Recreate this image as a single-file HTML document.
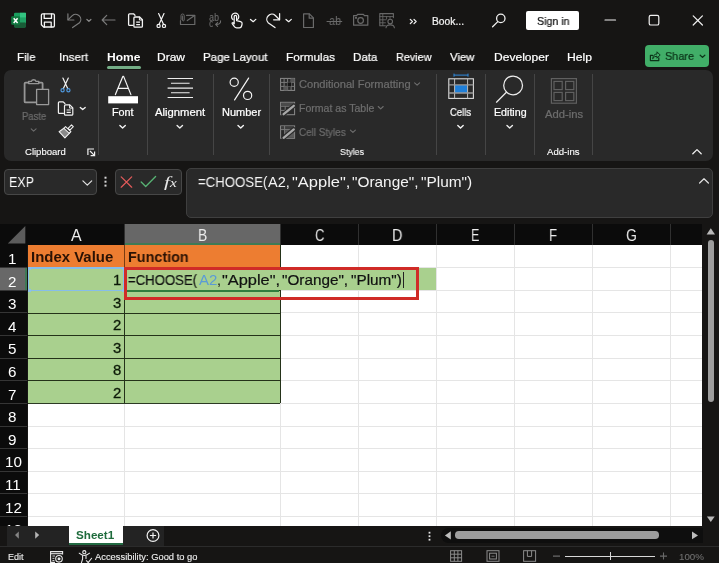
<!DOCTYPE html>
<html lang="en"><head><meta charset="utf-8"><title>Excel</title>
<style>
*{box-sizing:border-box;margin:0;padding:0}
html,body{width:719px;height:563px;overflow:hidden;background:#161514}
body{font-family:"Liberation Sans","DejaVu Sans",sans-serif;color:#fff;position:relative}
.a{position:absolute}
.t{position:absolute;white-space:nowrap;line-height:1;transform-origin:0 50%;will-change:transform}
svg{position:absolute;left:0;top:0;overflow:visible}
</style></head><body>
<div class="a" style="left:4px;top:70px;width:709px;height:91px;background:#292929;border-radius:7px"></div>
<div class="a" style="left:107px;top:65.5px;width:34px;height:3px;background:#74ad86;border-radius:1.5px"></div>
<div class="a" style="left:526px;top:11px;width:53px;height:18.5px;background:#ffffff;border-radius:2px"></div>
<div class="a" style="left:645px;top:44.5px;width:64px;height:22.5px;background:#41ae68;border-radius:4px"></div>
<div class="a" style="left:98px;top:74px;width:1px;height:81px;background:#454545;"></div>
<div class="a" style="left:147.3px;top:74px;width:1px;height:81px;background:#454545;"></div>
<div class="a" style="left:213px;top:74px;width:1px;height:81px;background:#454545;"></div>
<div class="a" style="left:269px;top:74px;width:1px;height:81px;background:#454545;"></div>
<div class="a" style="left:436px;top:74px;width:1px;height:81px;background:#454545;"></div>
<div class="a" style="left:485px;top:74px;width:1px;height:81px;background:#454545;"></div>
<div class="a" style="left:534.3px;top:74px;width:1px;height:81px;background:#454545;"></div>
<div class="a" style="left:592px;top:74px;width:1px;height:81px;background:#454545;"></div>
<div class="a" style="left:4px;top:168.5px;width:93px;height:26px;background:#292929;border:1px solid #474747;border-radius:4px"></div>
<div class="a" style="left:115px;top:168.5px;width:67px;height:26px;background:#292929;border:1px solid #474747;border-radius:4px"></div>
<div class="a" style="left:185.5px;top:168px;width:527px;height:49.5px;background:#292929;border:1px solid #3f3f3f;border-radius:5px"></div>
<div class="a" style="left:0px;top:223.5px;width:702px;height:21.69999999999999px;background:#0b0b0b;"></div>
<div class="a" style="left:0px;top:245.2px;width:27.4px;height:280.40000000000003px;background:#0b0b0b;"></div>
<div class="a" style="left:28px;top:245.2px;width:674px;height:280.40000000000003px;background:#ffffff;"></div>
<div class="a" style="left:124.5px;top:223.5px;width:155px;height:21.7px;background:#676767;border-bottom:2px solid #3f7a55"></div>
<div class="a" style="left:0px;top:268.3px;width:27.4px;height:22.6px;background:#686868;border-right:2px solid #3f7a55"></div>
<div class="a" style="left:124px;top:224px;width:1px;height:21px;background:#303030;"></div>
<div class="a" style="left:280px;top:224px;width:1px;height:21px;background:#303030;"></div>
<div class="a" style="left:358px;top:224px;width:1px;height:21px;background:#303030;"></div>
<div class="a" style="left:436px;top:224px;width:1px;height:21px;background:#303030;"></div>
<div class="a" style="left:514px;top:224px;width:1px;height:21px;background:#303030;"></div>
<div class="a" style="left:592px;top:224px;width:1px;height:21px;background:#303030;"></div>
<div class="a" style="left:670px;top:224px;width:1px;height:21px;background:#303030;"></div>
<div class="a" style="left:0px;top:267px;width:27.4px;height:1px;background:#353535;"></div>
<div class="a" style="left:0px;top:290px;width:27.4px;height:1px;background:#353535;"></div>
<div class="a" style="left:0px;top:312px;width:27.4px;height:1px;background:#353535;"></div>
<div class="a" style="left:0px;top:335px;width:27.4px;height:1px;background:#353535;"></div>
<div class="a" style="left:0px;top:358px;width:27.4px;height:1px;background:#353535;"></div>
<div class="a" style="left:0px;top:380px;width:27.4px;height:1px;background:#353535;"></div>
<div class="a" style="left:0px;top:403px;width:27.4px;height:1px;background:#353535;"></div>
<div class="a" style="left:0px;top:426px;width:27.4px;height:1px;background:#353535;"></div>
<div class="a" style="left:0px;top:448px;width:27.4px;height:1px;background:#353535;"></div>
<div class="a" style="left:0px;top:471px;width:27.4px;height:1px;background:#353535;"></div>
<div class="a" style="left:0px;top:493px;width:27.4px;height:1px;background:#353535;"></div>
<div class="a" style="left:0px;top:516px;width:27.4px;height:1px;background:#353535;"></div>
<div class="a" style="left:124px;top:245.2px;width:1px;height:280.40000000000003px;background:#e5e5e5;"></div>
<div class="a" style="left:280px;top:245.2px;width:1px;height:280.40000000000003px;background:#e5e5e5;"></div>
<div class="a" style="left:358px;top:245.2px;width:1px;height:280.40000000000003px;background:#e5e5e5;"></div>
<div class="a" style="left:436px;top:245.2px;width:1px;height:280.40000000000003px;background:#e5e5e5;"></div>
<div class="a" style="left:514px;top:245.2px;width:1px;height:280.40000000000003px;background:#e5e5e5;"></div>
<div class="a" style="left:592px;top:245.2px;width:1px;height:280.40000000000003px;background:#e5e5e5;"></div>
<div class="a" style="left:670px;top:245.2px;width:1px;height:280.40000000000003px;background:#e5e5e5;"></div>
<div class="a" style="left:28px;top:267px;width:674px;height:1px;background:#e5e5e5;"></div>
<div class="a" style="left:28px;top:290px;width:674px;height:1px;background:#e5e5e5;"></div>
<div class="a" style="left:28px;top:312px;width:674px;height:1px;background:#e5e5e5;"></div>
<div class="a" style="left:28px;top:335px;width:674px;height:1px;background:#e5e5e5;"></div>
<div class="a" style="left:28px;top:358px;width:674px;height:1px;background:#e5e5e5;"></div>
<div class="a" style="left:28px;top:380px;width:674px;height:1px;background:#e5e5e5;"></div>
<div class="a" style="left:28px;top:403px;width:674px;height:1px;background:#e5e5e5;"></div>
<div class="a" style="left:28px;top:426px;width:674px;height:1px;background:#e5e5e5;"></div>
<div class="a" style="left:28px;top:448px;width:674px;height:1px;background:#e5e5e5;"></div>
<div class="a" style="left:28px;top:471px;width:674px;height:1px;background:#e5e5e5;"></div>
<div class="a" style="left:28px;top:493px;width:674px;height:1px;background:#e5e5e5;"></div>
<div class="a" style="left:28px;top:516px;width:674px;height:1px;background:#e5e5e5;"></div>
<div class="a" style="left:28px;top:245.2px;width:252px;height:22.6px;background:#ed7d31;"></div>
<div class="a" style="left:28px;top:267.8px;width:252px;height:135.60000000000002px;background:#a9d08e;"></div>
<div class="a" style="left:280px;top:268.3px;width:156px;height:21.6px;background:#a9d08e;"></div>
<div class="a" style="left:28px;top:289.9px;width:252px;height:1px;background:#243219;"></div>
<div class="a" style="left:28px;top:312.5px;width:252px;height:1px;background:#243219;"></div>
<div class="a" style="left:28px;top:335.1px;width:252px;height:1px;background:#243219;"></div>
<div class="a" style="left:28px;top:357.7px;width:252px;height:1px;background:#243219;"></div>
<div class="a" style="left:28px;top:380.3px;width:252px;height:1px;background:#243219;"></div>
<div class="a" style="left:28px;top:402.9px;width:252px;height:1px;background:#2c3a24;"></div>
<div class="a" style="left:123.6px;top:245.2px;width:1px;height:158.20000000000002px;background:#243219;"></div>
<div class="a" style="left:279.5px;top:245.2px;width:1px;height:22.6px;background:#243219;"></div>
<div class="a" style="left:279.5px;top:290.4px;width:1px;height:113.0px;background:#243219;"></div>
<div class="a" style="left:123.6px;top:245.2px;width:1px;height:22.6px;background:#7a3c12;"></div>
<div class="a" style="left:28px;top:267.40000000000003px;width:96px;height:1.5px;background:#86bdea;"></div>
<div class="a" style="left:28px;top:289.79999999999995px;width:96px;height:1.6px;background:#86bdea;"></div>
<div class="a" style="left:28px;top:267.8px;width:1px;height:22.6px;background:#86bdea;"></div>
<div class="a" style="left:123px;top:267.8px;width:1px;height:22.6px;background:#86bdea;"></div>
<div class="a" style="left:27.5px;top:266.5px;width:3px;height:3px;background:#8fbfe8;"></div>
<div class="a" style="left:121.8px;top:266.5px;width:3px;height:3px;background:#8fbfe8;"></div>
<div class="a" style="left:27.5px;top:288.59999999999997px;width:3px;height:3px;background:#8fbfe8;"></div>
<div class="a" style="left:121.8px;top:288.59999999999997px;width:3px;height:3px;background:#8fbfe8;"></div>
<div class="a" style="left:127px;top:290.0px;width:152px;height:1.8px;background:#2f7d3e;"></div>
<div class="a" style="left:123.6px;top:267.2px;width:295.6px;height:32.8px;border:3.4px solid #d02b27"></div>
<div class="a" style="left:402.6px;top:272px;width:1px;height:16px;background:#222;"></div>
<div class="a" style="left:702px;top:223.5px;width:17px;height:302.1px;background:#161514;"></div>
<div class="a" style="left:707.5px;top:239.5px;width:6.6px;height:162px;background:#9d9d9d;border-radius:3.3px"></div>
<div class="a" style="left:0px;top:525.6px;width:719px;height:37.39999999999998px;background:#161514;"></div>
<div class="a" style="left:7px;top:526.0px;width:157px;height:19.6px;background:#232323;"></div>
<div class="a" style="left:440.5px;top:528px;width:262px;height:15px;background:#0e0e0e;border-radius:7.5px 0 0 7.5px"></div>
<div class="a" style="left:0px;top:546px;width:719px;height:1px;background:#2b2b2b;"></div>
<div class="a" style="left:68.8px;top:525.6px;width:54.4px;height:17.6px;background:#ffffff;"></div>
<div class="a" style="left:68.8px;top:543.2px;width:54.2px;height:2px;background:#226a42;"></div>
<div class="a" style="left:455px;top:531.3px;width:203.5px;height:7.6px;background:#9d9d9d;border-radius:3.8px"></div>
<div class="a" style="left:565px;top:555.6px;width:90px;height:1px;background:#d8d8d8;"></div>
<div class="a" style="left:609.6px;top:552px;width:1.2px;height:8px;background:#d8d8d8;"></div>
<svg width="719" height="563" viewBox="0 0 719 563" fill="none" stroke-linecap="round" stroke-linejoin="round">
<!-- excel logo -->
<g stroke="none">
<rect x="14" y="12.8" width="12" height="14.6" rx="1.3" fill="#1a9e5f"/>
<rect x="20" y="12.8" width="6" height="4.9" fill="#33c481"/>
<rect x="14" y="17.7" width="6" height="4.9" fill="#107c41"/>
<rect x="20" y="17.7" width="6" height="4.9" fill="#21a366"/>
<rect x="14" y="22.6" width="12" height="4.8" rx="1.2" fill="#185c37"/>
<rect x="11.2" y="16.2" width="8.8" height="8.6" rx="1" fill="#0f7a40"/>
<path d="M13.7 18.2 L17.6 23 M17.6 18.2 L13.7 23" stroke="#fff" stroke-width="1.5" stroke-linecap="butt"/>
</g>
<!-- save -->
<g stroke="#f5f5f5" stroke-width="1.3">
<path d="M42.6 13.8 H53.2 Q54.4 13.8 54.4 15 V25.8 Q54.4 27 53.2 27 H43.6 L41.4 24.8 V15 Q41.4 13.8 42.6 13.8 Z"/>
<path d="M44.2 13.8 V18.4 H51.5 V13.8"/>
<path d="M44.4 27 V22.2 H51.2 V27"/>
</g>
<!-- undo -->
<g stroke="#7b7b7b" stroke-width="1.2">
<path d="M67.9 13.8 V20 H73.9"/>
<path d="M68.2 19.7 L72.3 15.6 A5.1 5.1 0 0 1 79.5 22.8 L72.6 27.6"/>
<path d="M86.900 19.500 L88.900 21.300 L90.900 19.500" stroke="#8a8a8a" stroke-width="1.200"/>
<path d="M102.2 20 H115 M106.7 15.4 L102.2 20 L106.7 24.6"/>
</g>
<!-- copy -->
<g stroke="#f5f5f5" stroke-width="1.3">
<path d="M133 25.4 H129.6 Q128.6 25.4 128.6 24.4 V14.8 Q128.6 13.8 129.6 13.8 H133.5 L135 15.3"/>
<path d="M134.9 17 H139.6 L142.4 19.8 V26.2 Q142.4 27.2 141.4 27.2 H134.9 Q133.9 27.2 133.9 26.2 V18 Q133.9 17 134.9 17 Z"/>
<path d="M139.4 17.2 V20 H142.2" stroke-width="1"/>
<path d="M136.2 22.2 H140 M136.2 24.6 H140" stroke-width="1.2" stroke-linecap="butt"/>
</g>
<!-- scissors -->
<g stroke="#f5f5f5" stroke-width="1.2">
<path d="M158.6 13.5 L163.6 24.4 M164 13.5 L159 24.4"/>
<circle cx="158.6" cy="25.9" r="1.6"/><circle cx="164" cy="25.9" r="1.6"/>
</g>
<!-- mail attach (disabled) -->
<g stroke="#696969" stroke-width="1.2">
<path d="M186.6 15.4 H194.8 V24.5 H180.5 V20.5"/>
<path d="M187.3 20.6 L194.6 15.6"/>
<path d="M181 19.5 V15.6 A1.6 1.6 0 0 1 184.2 15.6 V20 A0.9 0.9 0 0 1 182.4 20 V16" stroke-width="1"/>
</g>
<!-- abc arrow (disabled) -->
<g stroke="#6e6e6e" stroke-width="1.1">
<path d="M220.6 20.8 Q220.8 24.6 216 24.4 M217.6 22.6 L215.6 24.4 L217.6 26.3"/>
</g>
<!-- touch -->
<g stroke="#f5f5f5" stroke-width="1.25">
<path d="M233 19.6 A3.6 3.6 0 1 1 237.6 19.4"/>
<path d="M234.2 23.8 V16.6 A1.2 1.2 0 0 1 236.6 16.6 V20.6 L240.6 21.6 Q242.3 22.1 242.1 23.8 L241.6 26 Q241.2 27.8 239.4 27.8 H236.6 Q235.2 27.8 234.4 26.6 L232.2 23.6 Q231.8 22.6 233 22.6 L234.2 23.8"/>
<path d="M250.5 19.4 L253.2 21.7 L255.8 19.4"/>
</g>
<!-- redo -->
<g stroke="#f5f5f5" stroke-width="1.25">
<path d="M279.6 13.6 V19.8 H273.6"/>
<path d="M279.3 19.5 L275.3 15.5 A5.1 5.1 0 0 0 268.1 22.7 L275 27.6"/>
<path d="M286 19.4 L288.7 21.7 L291.3 19.4"/>
</g>
<!-- new doc (disabled) -->
<g stroke="#6a6a6a" stroke-width="1.2">
<path d="M303.6 13.9 H309.4 L313.4 17.9 V27.5 H303.6 Z"/>
<path d="M309.2 14.2 V18.2 H313.2"/>
</g>
<!-- ab strikethrough line -->
<path d="M327 21.5 H341.8" stroke="#6a6a6a" stroke-width="1"/>
<!-- camera (disabled) -->
<g stroke="#6a6a6a" stroke-width="1.2">
<path d="M353.6 15.6 H356.6 L357.6 14.4 H363.4 L364.4 15.6 H367.8 V25.2 H353.6 Z"/>
<circle cx="360.6" cy="20.5" r="2.8"/>
<circle cx="356" cy="17.8" r="0.5" fill="#6a6a6a"/>
</g>
<!-- table person (disabled) -->
<g stroke="#676767" stroke-width="1.1">
<path d="M393.4 17.6 V13.6 H379.8 V25.8 H385.4"/>
<path d="M379.8 16.6 H393.4 M382.8 13.8 V25.6 M379.8 19.8 H386 M379.8 22.8 H385.4 M386.6 16.6 V19 M390 16.6 V18.4" stroke-width="0.9"/>
<circle cx="390.2" cy="21.6" r="2.3"/>
<path d="M386 27.8 Q386.4 24.9 390.2 24.9 Q394 24.9 394.4 27.8"/>
</g>
<!-- overflow >> -->
<g stroke="#f0f0f0" stroke-width="1.300">
<path d="M410.300 19.400 L412.400 21.500 L410.300 23.600 M414 19.400 L416.100 21.500 L414 23.600"/>
</g>
<!-- search -->
<g stroke="#f0f0f0" stroke-width="1.3">
<circle cx="500.8" cy="18.4" r="4.2"/><path d="M497.8 21.6 L492.6 26.8"/>
</g>
<!-- window controls -->
<g stroke="#f0f0f0" stroke-width="1.2">
<path d="M605 20 H615.5"/>
<rect x="649.2" y="15.4" width="9.6" height="9.6" rx="1.6"/>
<path d="M693.2 15.8 L702.4 25 M702.4 15.8 L693.2 25"/>
</g>

<!-- ===== ribbon icons ===== -->
<!-- paste (disabled) -->
<g stroke="#969696" stroke-width="1.8">
<path d="M36 102.4 H25.6 Q24.6 102.4 24.6 101.4 V83.6 Q24.6 82.6 25.6 82.6 H28.4 M39 82.6 H41.6 Q42.6 82.6 42.6 83.6 V89"/>
<path d="M28.6 83.6 V81.4 H31.4 A2.4 2.4 0 0 1 36 81.400 H38.8 V83.600 Z" stroke-width="1.4"/>
<rect x="36.6" y="89.400" width="12" height="15.2" fill="#2b2b2b" stroke="#9a9a9a" stroke-width="1.3"/>
</g>
<path d="M31.200 128.900 L33.600 131.100 L36.100 128.900" stroke="#6c6c6c" stroke-width="1.1"/>
<!-- cut -->
<g stroke-width="1.2">
<path d="M62.900 78.100 L67.700 88.400 M68.300 78.100 L63.400 88.400" stroke="#f2f2f2"/>
<circle cx="62.600" cy="90.300" r="1.600" stroke="#4e97dc"/><circle cx="68.400" cy="90.300" r="1.600" stroke="#4e97dc"/>
</g>
<!-- copy -->
<g stroke="#f2f2f2" stroke-width="1.2">
<path d="M63.400 113.400 H59.400 Q58.400 113.400 58.400 112.400 V102.800 Q58.400 101.800 59.400 101.800 H63.200 L64.900 103.500"/>
<path d="M65.500 104.900 H69.800 L72.800 107.900 V114.200 Q72.800 115.200 71.800 115.200 H65.500 Q64.500 115.200 64.500 114.200 V105.900 Q64.500 104.900 65.500 104.900 Z"/>
<path d="M69.600 105.100 V108.100 H72.600" stroke-width="1"/>
<path d="M66.600 110 H70.800 M66.600 112.400 H70.800" stroke-width="1.100" stroke-linecap="butt"/>
<path d="M80.300 107.400 L82.700 109.600 L85.200 107.400" stroke-width="1.300"/>
</g>
<!-- format painter -->
<g stroke="#efefef" stroke-width="1.100">
<path d="M71.500 124.900 L73.300 126.700 L69.900 130.100 L68.100 128.300 Z"/>
<path d="M65.500 126.700 L70.900 131.700 L69.300 133.400 L63.900 128.300 Z"/>
<path d="M63.900 128.300 L59.100 131.700 L64.900 137.900 L69.300 133.400" fill="#c9c9c9" fill-opacity="0.600"/>
</g>
<!-- dialog launcher -->
<g stroke="#f2f2f2" stroke-width="1.200" stroke-linecap="butt" stroke-linejoin="miter">
<path d="M87.900 155 V149 H94"/>
<path d="M90 151 L94.400 155.400 M94.600 151.600 V155.600 H90.600"/>
</g>
<!-- font -->
<g stroke="#f5f5f5" stroke-width="1.200">
<path d="M115.400 94.600 L122.800 76.400 H123.600 L130.900 94.600 M118 88.300 H128.300"/>
<rect x="108.200" y="96.200" width="29.800" height="7.200" fill="#ffffff" stroke="none"/>
<path d="M119.900 125.500 L122.600 128 L125.300 125.500" stroke-width="1.400"/>
</g>
<!-- alignment -->
<g stroke="#ededed" stroke-width="1.100" stroke-linecap="butt">
<path d="M167.600 78.500 H193 M171 83.300 H189.600 M167.600 88.100 H193 M171 92.800 H189.600 M167.600 97.500 H193"/>
<path d="M177.100 125.500 L179.800 128 L182.500 125.500" stroke-width="1.400" stroke-linecap="round"/>
</g>
<!-- number -->
<g stroke="#f5f5f5" stroke-width="1.200">
<circle cx="234.200" cy="82.200" r="4.100"/><circle cx="247.600" cy="95.400" r="4.100"/>
<path d="M248.600 78.100 L234.600 99.900"/>
<path d="M238 125.500 L240.700 128 L243.400 125.500" stroke-width="1.400"/>
</g>
<!-- conditional formatting (disabled) -->
<g stroke="#8a8a8a" stroke-width="1" stroke-linecap="butt" stroke-linejoin="miter">
<rect x="280.600" y="78.400" width="14" height="12"/>
<path d="M284.100 78.400 V90.400 M287.600 78.400 V90.400 M291.100 78.400 V90.400 M280.600 82.400 H294.600 M280.600 86.400 H294.600" stroke="#7a7a7a"/>
<rect x="287.600" y="82.400" width="3.500" height="4" fill="#161616" stroke="none"/>
<rect x="284.100" y="86.400" width="3.500" height="4" fill="#555" stroke="none"/>
<rect x="291.100" y="78.400" width="3.500" height="4" fill="#555" stroke="none"/>
</g>
<!-- format as table (disabled) -->
<g stroke="#8a8a8a" stroke-width="1" stroke-linecap="butt" stroke-linejoin="miter">
<rect x="280.600" y="102.300" width="14" height="12.400"/>
<path d="M285.200 102.300 V114.700 M289.900 102.300 V110 M280.600 106.300 H294.600 M280.600 110.400 H290" stroke="#7a7a7a"/>
<rect x="281.100" y="102.800" width="13" height="3.300" fill="#4a4a4a" stroke="none"/>
<path d="M283.600 114.200 L293.800 105.800" stroke="#2b2b2b" stroke-width="4.600" stroke-linecap="round"/>
<path d="M283.600 114.200 L293.800 105.800" stroke="#a8a8a8" stroke-width="2.300" stroke-linecap="round"/>
</g>
<!-- cell styles (disabled) -->
<g stroke="#8a8a8a" stroke-width="1" stroke-linecap="butt" stroke-linejoin="miter">
<rect x="280.600" y="125.900" width="14" height="12.400"/>
<rect x="281.100" y="126.400" width="13" height="3" fill="#3c3c3c" stroke="none"/>
<path d="M284.600 125.900 V138.300 M280.600 129.600 H294.600" stroke="#7a7a7a"/>
<rect x="285.100" y="130.100" width="9" height="7.700" fill="#5a5a5a" stroke="none"/>
<path d="M283.600 137.800 L293.800 129.400" stroke="#2b2b2b" stroke-width="4.600" stroke-linecap="round"/>
<path d="M283.600 137.800 L293.800 129.400" stroke="#a8a8a8" stroke-width="2.300" stroke-linecap="round"/>
</g>
<!-- disabled chevrons of styles -->
<g stroke="#6f6f6f" stroke-width="1.100">
<path d="M414.600 82.900 L417.100 85.200 L419.600 82.900"/>
<path d="M378.200 106.500 L380.700 108.800 L383.200 106.500"/>
<path d="M350.400 130.100 L352.900 132.400 L355.400 130.100"/>
</g>
<!-- cells -->
<g stroke-linecap="butt" stroke-linejoin="miter">
<rect x="454.600" y="85" width="13" height="8" fill="#1f7fd8" stroke="none"/>
<rect x="448.800" y="78.800" width="24.600" height="19.600" stroke="#dcdcdc" stroke-width="1.100"/>
<path d="M454.600 78.800 V98.400 M467.600 78.800 V98.400" stroke="#bdbdbd" stroke-width="1"/>
<path d="M448.800 84.800 H473.400 M448.800 93 H473.400" stroke="#9a9a9a" stroke-width="1.300"/>
<path d="M454 75.100 H468 M454 73.600 V76.700 M468 73.600 V76.700" stroke="#2f8be0" stroke-width="1"/>
<path d="M457.800 125.500 L460.500 128 L463.200 125.500" stroke="#f5f5f5" stroke-width="1.400" stroke-linecap="round"/>
</g>
<!-- editing -->
<g stroke="#ececec" stroke-width="1.250">
<circle cx="513.100" cy="85.400" r="9.400"/>
<path d="M506.400 92.200 L496.500 102.200"/>
<path d="M507 125.500 L509.700 128 L512.400 125.500" stroke-width="1.400"/>
</g>
<!-- add-ins (disabled) -->
<g stroke="#606060" stroke-width="1.200" stroke-linejoin="miter">
<rect x="551.400" y="78.600" width="25" height="24.600"/>
<rect x="554" y="81.400" width="8.200" height="8.200"/><rect x="565.600" y="81.400" width="8.200" height="8.200"/>
<rect x="554" y="92.400" width="8.200" height="8.200"/><rect x="565.600" y="92.400" width="8.200" height="8.200"/>
</g>
<!-- collapse ribbon -->
<path d="M692.800 153.800 L697 149.600 L701.200 153.800" stroke="#f0f0f0" stroke-width="1.300"/>
<!-- share icon + chevron -->
<g stroke="#0b3318" stroke-width="1.200">
<path d="M652.600 55.400 H650.400 V60.600 H658.800 V57.800"/>
<path d="M652.800 58.400 Q653 54.200 657 54 V51.800 L660.200 55 L657 58.200 V56.200 Q654.400 56 652.800 58.400 Z" stroke-width="1"/>
<path d="M700.200 55.200 L702.500 57.400 L704.800 55.200" stroke-width="1.300"/>
</g>

<!-- ===== formula bar icons ===== -->
<path d="M82.900 180.800 L87.300 185.200 L91.700 180.800" stroke="#e2e2e2" stroke-width="1.200"/>
<g fill="#d6d6d6" stroke="none"><rect x="104.500" y="176.700" width="2" height="2"/><rect x="104.500" y="180.700" width="2" height="2"/><rect x="104.500" y="184.600" width="2" height="2"/></g>
<path d="M121.200 176.900 L131.700 187.200 M131.700 176.900 L121.200 187.200" stroke="#e25a5a" stroke-width="1.250"/>
<path d="M141.200 182 L145.700 186.500 L155.600 176.500" stroke="#58b374" stroke-width="1.300"/>
<path d="M699.600 183 L704 178.700 L708.400 183" stroke="#e2e2e2" stroke-width="1.200"/>
<!-- select-all corner -->
<path d="M7.800 243.400 H25.300 V225.900 Z" fill="#5c5c5c" stroke="none"/>
<!-- v scrollbar arrows -->
<path d="M706.600 234.400 H715 L710.800 228.200 Z" fill="#b9b9b9" stroke="none"/>
<path d="M706.900 516.600 H714.700 L710.800 522 Z" fill="#b9b9b9" stroke="none"/>
<!-- h scrollbar -->
<g fill="#e4e4e4" stroke="none"><rect x="428.600" y="531.800" width="1.800" height="1.800"/><rect x="428.600" y="535.300" width="1.800" height="1.800"/><rect x="428.600" y="538.800" width="1.800" height="1.800"/></g>
<path d="M450.800 531.300 V539.500 L444.900 535.400 Z" fill="#bdbdbd" stroke="none"/>
<path d="M692 531.600 V539.200 L698 535.400 Z" fill="#bdbdbd" stroke="none"/>
<!-- sheet nav -->
<path d="M18.800 531.500 V538.700 L15 535.100 Z" fill="#858585" stroke="none"/>
<path d="M35.200 531.500 V538.700 L39.200 535.100 Z" fill="#b4b4b4" stroke="none"/>
<g stroke="#f2f2f2" stroke-width="1.200"><circle cx="153" cy="535.500" r="5.900"/><path d="M149.900 535.500 H156.100 M153 532.400 V538.600" stroke-linecap="butt"/></g>
<!-- status bar: macro record -->
<g stroke="#e8e8e8" stroke-width="1.100" stroke-linecap="butt" stroke-linejoin="miter">
<path d="M55 562.400 H50.600 V551.600 H62.600 V554.600"/>
<path d="M50.600 553.700 H62.600" />
<path d="M52.400 556 H55 M52.400 558.300 H54.400 M52.400 560.500 H54.400" stroke-width="0.900"/>
<circle cx="59" cy="558.800" r="3.300"/><circle cx="59" cy="558.800" r="1.500" fill="#e8e8e8" stroke="none"/>
</g>
<!-- status bar: accessibility -->
<g stroke="#ececec" stroke-width="1.050">
<circle cx="84.300" cy="552.200" r="1.600"/>
<path d="M79.200 553.200 Q81.600 555.400 84.300 555.400 Q87 555.400 89.600 553.200"/>
<path d="M82.600 555.600 V559 L81.400 562.800 M86 555.600 V558.600"/>
<path d="M86.400 560.700 L88.200 562.600 L91.600 558.200"/>
</g>
<!-- view buttons -->
<g stroke="#8c8c8c" stroke-width="1" stroke-linecap="butt" stroke-linejoin="miter">
<rect x="450.600" y="550.700" width="11" height="10.600"/>
<path d="M454.300 550.700 V561.300 M457.900 550.700 V561.300 M450.600 554.200 H461.600 M450.600 557.800 H461.600"/>
<rect x="487" y="550.700" width="12" height="10.600"/><rect x="489.600" y="553.200" width="6.800" height="5.800"/><path d="M491.400 556.200 H494.600" stroke-width="0.800"/>
<rect x="523.600" y="550.700" width="12" height="10.600"/><path d="M527.400 550.700 V556.400 H531.600 V550.700" />
</g>
<!-- zoom -/+ -->
<g stroke="#6a6a6a" stroke-width="1.100" stroke-linecap="butt"><path d="M553 556.100 H560 M660 556.100 H667 M663.500 552.600 V559.600"/></g>
</svg>

<!-- text -->
<div class="t" style="left:432.00px;top:16.97px;font-size:10.2px;color:#f2f2f2;transform:scaleX(1.0089);-webkit-text-stroke:0.22px currentColor;">Book...</div>
<div class="t" style="left:536.70px;top:16.22px;font-size:11.2px;color:#111;transform:scaleX(0.9498);-webkit-text-stroke:0.22px currentColor;">Sign in</div>
<div class="t" style="left:16.50px;top:52.11px;font-size:11.8px;color:#fff;transform:scaleX(0.9729);-webkit-text-stroke:0.22px currentColor;">File</div>
<div class="t" style="left:59.00px;top:52.11px;font-size:11.8px;color:#fff;transform:scaleX(0.9825);-webkit-text-stroke:0.22px currentColor;">Insert</div>
<div class="t" style="left:106.50px;top:52.11px;font-size:11.8px;color:#ffffff;font-weight:bold;transform:scaleX(1.0219);">Home</div>
<div class="t" style="left:157.00px;top:52.11px;font-size:11.8px;color:#fff;transform:scaleX(1.0170);-webkit-text-stroke:0.22px currentColor;">Draw</div>
<div class="t" style="left:202.50px;top:52.11px;font-size:11.8px;color:#fff;transform:scaleX(0.9736);-webkit-text-stroke:0.22px currentColor;">Page Layout</div>
<div class="t" style="left:286.00px;top:52.11px;font-size:11.8px;color:#fff;transform:scaleX(0.9965);-webkit-text-stroke:0.22px currentColor;">Formulas</div>
<div class="t" style="left:353.00px;top:52.11px;font-size:11.8px;color:#fff;transform:scaleX(0.9831);-webkit-text-stroke:0.22px currentColor;">Data</div>
<div class="t" style="left:395.50px;top:52.11px;font-size:11.8px;color:#fff;transform:scaleX(0.9176);-webkit-text-stroke:0.22px currentColor;">Review</div>
<div class="t" style="left:450.00px;top:52.11px;font-size:11.8px;color:#fff;transform:scaleX(0.9661);-webkit-text-stroke:0.22px currentColor;">View</div>
<div class="t" style="left:493.50px;top:52.11px;font-size:11.8px;color:#fff;transform:scaleX(1.0227);-webkit-text-stroke:0.22px currentColor;">Developer</div>
<div class="t" style="left:566.50px;top:52.11px;font-size:11.8px;color:#fff;transform:scaleX(1.0303);-webkit-text-stroke:0.22px currentColor;">Help</div>
<div class="t" style="left:665.00px;top:51.31px;font-size:11.8px;color:#0b3318;transform:scaleX(0.9211);-webkit-text-stroke:0.22px currentColor;">Share</div>
<div class="t" style="left:21.60px;top:111.67px;font-size:10.2px;color:#6d6d6d;transform:scaleX(0.9285);-webkit-text-stroke:0.22px currentColor;">Paste</div>
<div class="t" style="left:25.00px;top:147.81px;font-size:9.2px;color:#fff;transform:scaleX(1.0374);-webkit-text-stroke:0.1px currentColor;">Clipboard</div>
<div class="t" style="left:112.40px;top:108.40px;font-size:10.4px;color:#fff;transform:scaleX(1.0386);-webkit-text-stroke:0.22px currentColor;">Font</div>
<div class="t" style="left:155.40px;top:108.40px;font-size:10.4px;color:#fff;transform:scaleX(1.0840);-webkit-text-stroke:0.22px currentColor;">Alignment</div>
<div class="t" style="left:221.50px;top:108.40px;font-size:10.4px;color:#fff;transform:scaleX(1.0577);-webkit-text-stroke:0.22px currentColor;">Number</div>
<div class="t" style="left:298.60px;top:80.40px;font-size:10.4px;color:#6d6d6d;transform:scaleX(1.0684);-webkit-text-stroke:0.22px currentColor;">Conditional Formatting</div>
<div class="t" style="left:298.60px;top:104.00px;font-size:10.4px;color:#6d6d6d;transform:scaleX(1.0146);-webkit-text-stroke:0.22px currentColor;">Format as Table</div>
<div class="t" style="left:298.60px;top:127.60px;font-size:10.4px;color:#6d6d6d;transform:scaleX(0.9512);-webkit-text-stroke:0.22px currentColor;">Cell Styles</div>
<div class="t" style="left:340.20px;top:148.01px;font-size:9.2px;color:#fff;transform:scaleX(0.9588);-webkit-text-stroke:0.1px currentColor;">Styles</div>
<div class="t" style="left:450.00px;top:108.40px;font-size:10.4px;color:#fff;transform:scaleX(0.9087);-webkit-text-stroke:0.22px currentColor;">Cells</div>
<div class="t" style="left:493.60px;top:108.40px;font-size:10.4px;color:#fff;transform:scaleX(1.0258);-webkit-text-stroke:0.22px currentColor;">Editing</div>
<div class="t" style="left:544.50px;top:110.40px;font-size:10.4px;color:#6d6d6d;transform:scaleX(1.0813);-webkit-text-stroke:0.22px currentColor;">Add-ins</div>
<div class="t" style="left:546.60px;top:148.11px;font-size:9.2px;color:#fff;transform:scaleX(1.0463);-webkit-text-stroke:0.1px currentColor;">Add-ins</div>
<div class="t" style="left:9.20px;top:173.98px;font-size:15.5px;color:#fff;transform:scaleX(0.8060);">EXP</div>
<div class="t" style="left:164.20px;top:174.22px;font-size:15.5px;color:#e8e8e8;font-family:'Liberation Serif','DejaVu Serif',serif;font-style:italic;transform:scaleX(1.3913);">f</div>
<div class="t" style="left:170.00px;top:175.89px;font-size:13.5px;color:#e8e8e8;font-family:'Liberation Serif','DejaVu Serif',serif;font-style:italic;transform:scaleX(1.1333);">x</div>
<div class="t" style="left:198.00px;top:175.08px;font-size:14.2px;color:#f4f4f4;transform:scaleX(0.9315);">=CHOOSE(</div>
<div class="t" style="left:268.20px;top:175.08px;font-size:14.2px;color:#f4f4f4;transform:scaleX(1.0236);">A2,</div>
<div class="t" style="left:291.60px;top:175.08px;font-size:14.2px;color:#f4f4f4;transform:scaleX(1.1607);">&quot;Apple&quot;,</div>
<div class="t" style="left:351.90px;top:175.08px;font-size:14.2px;color:#f4f4f4;transform:scaleX(1.0841);">&quot;Orange&quot;,</div>
<div class="t" style="left:420.80px;top:175.08px;font-size:14.2px;color:#f4f4f4;transform:scaleX(1.0865);">&quot;Plum&quot;)</div>
<div class="t" style="left:70.90px;top:227.99px;font-size:15.6px;color:#ececec;transform:scaleX(1.0186);">A</div>
<div class="t" style="left:198.00px;top:227.99px;font-size:15.6px;color:#ececec;transform:scaleX(0.8841);">B</div>
<div class="t" style="left:314.70px;top:227.99px;font-size:15.6px;color:#ececec;transform:scaleX(0.8344);">C</div>
<div class="t" style="left:392.20px;top:227.99px;font-size:15.6px;color:#ececec;transform:scaleX(0.9232);">D</div>
<div class="t" style="left:471.20px;top:227.99px;font-size:15.6px;color:#ececec;transform:scaleX(0.8072);">E</div>
<div class="t" style="left:549.40px;top:227.99px;font-size:15.6px;color:#ececec;transform:scaleX(0.8393);">F</div>
<div class="t" style="left:626.00px;top:227.99px;font-size:15.6px;color:#ececec;transform:scaleX(0.8896);">G</div>
<div class="t" style="left:8.10px;top:250.93px;font-size:15.2px;color:#fff;">1</div>
<div class="t" style="left:8.10px;top:273.53px;font-size:15.2px;color:#fff;">2</div>
<div class="t" style="left:8.10px;top:296.13px;font-size:15.2px;color:#fff;">3</div>
<div class="t" style="left:8.10px;top:318.73px;font-size:15.2px;color:#fff;">4</div>
<div class="t" style="left:8.10px;top:341.33px;font-size:15.2px;color:#fff;">5</div>
<div class="t" style="left:8.10px;top:363.93px;font-size:15.2px;color:#fff;">6</div>
<div class="t" style="left:8.10px;top:386.53px;font-size:15.2px;color:#fff;">7</div>
<div class="t" style="left:8.10px;top:409.13px;font-size:15.2px;color:#fff;">8</div>
<div class="t" style="left:8.10px;top:431.73px;font-size:15.2px;color:#fff;">9</div>
<div class="t" style="left:5.20px;top:454.33px;font-size:15.2px;color:#fff;">10</div>
<div class="t" style="left:5.20px;top:476.93px;font-size:15.2px;color:#fff;">11</div>
<div class="t" style="left:5.20px;top:499.53px;font-size:15.2px;color:#fff;">12</div>
<div class="t" style="left:5.20px;top:522.13px;font-size:15.2px;color:#fff;clip-path:inset(0 0 11.8px 0);">13</div>
<div class="t" style="left:31.20px;top:250.43px;font-size:14.5px;color:#2a1204;font-weight:bold;transform:scaleX(1.0314);">Index Value</div>
<div class="t" style="left:127.80px;top:250.43px;font-size:14.5px;color:#2a1204;font-weight:bold;transform:scaleX(0.9915);">Function</div>
<div class="t" style="left:113.00px;top:272.99px;font-size:14.9px;color:#0d1a08;-webkit-text-stroke:0.3px currentColor;">1</div>
<div class="t" style="left:113.00px;top:295.59px;font-size:14.9px;color:#0d1a08;-webkit-text-stroke:0.3px currentColor;">3</div>
<div class="t" style="left:113.00px;top:318.19px;font-size:14.9px;color:#0d1a08;-webkit-text-stroke:0.3px currentColor;">2</div>
<div class="t" style="left:113.00px;top:340.79px;font-size:14.9px;color:#0d1a08;-webkit-text-stroke:0.3px currentColor;">3</div>
<div class="t" style="left:113.00px;top:363.39px;font-size:14.9px;color:#0d1a08;-webkit-text-stroke:0.3px currentColor;">8</div>
<div class="t" style="left:113.00px;top:385.99px;font-size:14.9px;color:#0d1a08;-webkit-text-stroke:0.3px currentColor;">2</div>
<div class="t" style="left:127.90px;top:273.31px;font-size:14.4px;color:#111;transform:scaleX(0.9130);-webkit-text-stroke:0.2px currentColor;">=CHOOSE(</div>
<div class="t" style="left:198.60px;top:273.31px;font-size:14.4px;color:#5b9bd5;transform:scaleX(1.0449);">A2</div>
<div class="t" style="left:217.40px;top:273.31px;font-size:14.4px;color:#111;">,</div>
<div class="t" style="left:221.50px;top:273.31px;font-size:14.4px;color:#111;transform:scaleX(1.1366);-webkit-text-stroke:0.2px currentColor;">&quot;Apple&quot;,</div>
<div class="t" style="left:281.80px;top:273.31px;font-size:14.4px;color:#111;transform:scaleX(1.0624);-webkit-text-stroke:0.2px currentColor;">&quot;Orange&quot;,</div>
<div class="t" style="left:350.70px;top:273.31px;font-size:14.4px;color:#111;transform:scaleX(1.0628);-webkit-text-stroke:0.2px currentColor;">&quot;Plum&quot;)</div>
<div class="t" style="left:76.30px;top:528.78px;font-size:11.6px;color:#1e6b3c;font-weight:bold;transform:scaleX(1.0044);">Sheet1</div>
<div class="t" style="left:7.50px;top:552.88px;font-size:9px;color:#f0f0f0;transform:scaleX(0.9990);-webkit-text-stroke:0.1px currentColor;">Edit</div>
<div class="t" style="left:95.00px;top:552.88px;font-size:9px;color:#f0f0f0;transform:scaleX(1.0399);-webkit-text-stroke:0.1px currentColor;">Accessibility: Good to go</div>
<div class="t" style="left:679.00px;top:552.88px;font-size:9px;color:#6f6f6f;transform:scaleX(1.0855);-webkit-text-stroke:0.1px currentColor;">100%</div>
<div class="t" style="left:209.00px;top:11.89px;font-size:11px;color:#727272;transform:scaleX(0.8327);">ab</div>
<div class="t" style="left:209.00px;top:18.73px;font-size:10px;color:#727272;transform:scaleX(0.8800);">c</div>
<div class="t" style="left:328.60px;top:14.70px;font-size:12.4px;color:#6a6a6a;transform:scaleX(0.8698);">ab</div>
</body></html>
